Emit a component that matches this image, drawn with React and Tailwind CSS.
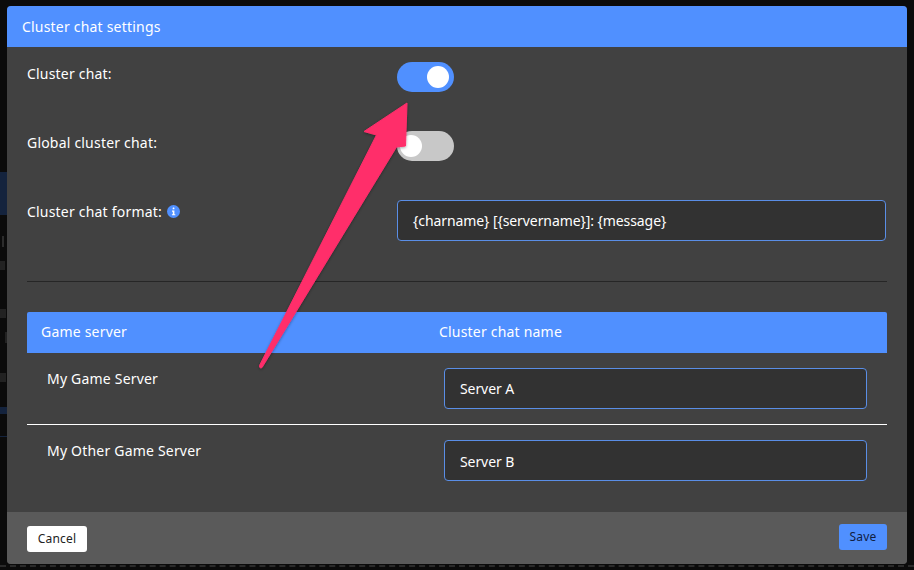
const font = { fontFamily: '"Noto Sans", "Open Sans", sans-serif' }

function Toggle({ on }) {
  return (
    <div className={`flex h-[30px] w-[57px] items-center rounded-full ${on ? 'justify-end bg-[#5090ff] pr-[5px]' : 'justify-start bg-[#c8c8c8] pl-[3px]'}`}>
      <div className="h-[22px] w-[22px] rounded-full bg-white" />
    </div>
  )
}

function TextBox({ value, className }) {
  return (
    <div className={`flex h-[41px] items-center rounded-[4px] border border-[#5a8ee6] bg-[#323232] pl-[15px] text-[14px] tracking-[-0.08px] text-white ${className}`}>
      {value}
    </div>
  )
}

function InfoDot() {
  return (
    <svg width="13" height="13" viewBox="0 0 13 13" className="ml-[5px] mt-[3px]">
      <circle cx="6.5" cy="6.5" r="6.5" fill="#5090ff" />
      <rect x="5.7" y="2.6" width="1.7" height="1.7" rx="0.4" fill="#fff" />
      <path d="M5 5.6h2.4v3.6h.9v1.1H4.9V9.2h.9V6.7H5z" fill="#fff" />
    </svg>
  )
}

function Arrow() {
  return (
    <svg className="pointer-events-none absolute left-0 top-0" width="914" height="570" viewBox="0 0 914 570">
      <defs>
        <filter id="arrowShadow" x="-20%" y="-20%" width="140%" height="140%">
          <feDropShadow dx="0" dy="1" stdDeviation="1.5" floodColor="#000" floodOpacity="0.35" />
        </filter>
      </defs>
      <path
        d="M407 103 L405.5 146 L396.5 147 L262 367.5 Q259.5 369 259.5 365.5 L376.5 135 L364 131.5 Z"
        fill="#ff2d6b"
        stroke="#ff2d6b"
        strokeWidth="1"
        strokeLinejoin="round"
        filter="url(#arrowShadow)"
      />
    </svg>
  )
}

export default function App() {
  return (
    <div className="relative h-[570px] w-[914px] overflow-hidden bg-[#0b0b0b] pl-[7px] pt-[6px]" style={font}>
      {/* dimmed page behind the modal */}
      <div className="absolute left-0 top-[172px] h-[43px] w-[7px] bg-[#14233d]" />
      <div className="absolute left-0 top-[407px] h-[7px] w-[7px] bg-[#14233d]" />
      <div className="absolute left-0 top-[436px] h-[1px] w-[7px] bg-[#14233d]" />
      <div className="absolute left-[2px] top-[236px] h-[11px] w-[2px] bg-[#2c2c2c]" />
      <div className="absolute left-0 top-[261px] h-[9px] w-[5px] bg-[#222]" />
      <div className="absolute left-0 top-[309px] h-[9px] w-[6px] bg-[#222]" />
      <div className="absolute left-[5px] top-[332px] h-[11px] w-[2px] bg-[#222]" />
      <div className="absolute left-0 top-[373px] h-[9px] w-[6px] bg-[#222]" />
      <div className="absolute left-0 top-[565px] h-[1px] w-[914px] border-t-2 border-dashed border-[#2a2a2a]" />

      <div className="relative flex h-[558px] w-[900px] flex-col overflow-hidden rounded-[4px] bg-[#414141] text-[14px] tracking-[0.2px] text-white">
        <div className="flex h-[41px] shrink-0 items-center bg-[#5090ff] pl-[15px]">Cluster chat settings</div>

        <div className="flex-1 px-[20px]">
          <div className="flex h-[69px] pt-[15px]">
            <div className="w-[370px] pt-[2px] leading-[20px]">Cluster chat:</div>
            <Toggle on />
          </div>
          <div className="flex h-[69px] pt-[15px]">
            <div className="w-[370px] pt-[2px] leading-[20px]">Global cluster chat:</div>
            <Toggle />
          </div>
          <div className="flex pt-[15px]">
            <div className="flex w-[370px] items-start pt-[2px] leading-[20px]">
              Cluster chat format:
              <InfoDot />
            </div>
            <TextBox value="{charname} [{servername}]: {message}" className="w-[489px]" />
          </div>

          <div className="mt-[40px] h-px bg-[#262626]" />

          <div className="mt-[30px] flex h-[41px] items-center rounded-t-[2px] bg-[#5090ff] pb-[2px]">
            <div className="w-[412px] pl-[14px]">Game server</div>
            <div>Cluster chat name</div>
          </div>

          <div className="flex h-[72px] border-b border-white">
            <div className="w-[417px] pl-[20px] pt-[16px] leading-[20px]">My Game Server</div>
            <TextBox value="Server A" className="mt-[15px] w-[423px]" />
          </div>
          <div className="flex h-[72px]">
            <div className="w-[417px] pl-[20px] pt-[16px] leading-[20px]">My Other Game Server</div>
            <TextBox value="Server B" className="mt-[15px] w-[423px] pt-[2px]" />
          </div>
        </div>

        <div className="flex h-[52px] shrink-0 items-start justify-between bg-[#5a5a5a] px-[20px] pt-[12px]">
          <button type="button" className="mt-[2px] h-[26px] w-[60px] rounded-[3px] bg-white text-[12px] text-[#222]">Cancel</button>
          <button type="button" className="h-[26px] w-[48px] rounded-[3px] bg-[#5090ff] text-[12px] text-[#10203f]">Save</button>
        </div>
      </div>
      <Arrow />
    </div>
  )
}
